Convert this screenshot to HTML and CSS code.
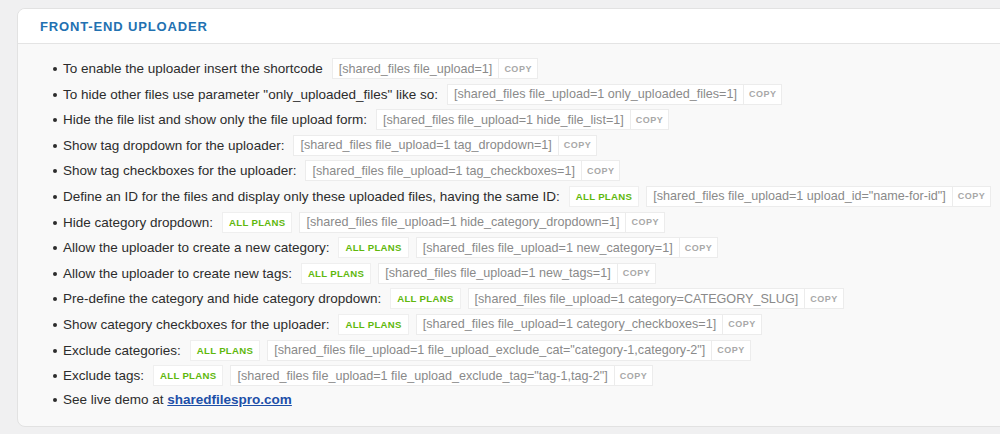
FILE: index.html
```html
<!DOCTYPE html>
<html lang="en">
<head>
    <meta charset="UTF-8">
    <meta name="viewport" content="width=device-width, initial-scale=1.0">
    <title>Front-end uploader</title>
    <link rel="stylesheet" href="styles.css">
</head>
<body>
    <div class="panel">
        <div class="panel-head">
            <h3>FRONT-END UPLOADER</h3>
        </div>
        <div class="panel-body">
            <ul class="opts">
                <li>
                    <span>To enable the uploader insert the shortcode</span>
                    <span class="sc"><code>[shared_files file_upload=1]</code><button class="copy">COPY</button></span>
                </li>
                <li>
                    <span>To hide other files use parameter "only_uploaded_files" like so:</span>
                    <span class="sc"><code>[shared_files file_upload=1 only_uploaded_files=1]</code><button class="copy">COPY</button></span>
                </li>
                <li>
                    <span>Hide the file list and show only the file upload form:</span>
                    <span class="sc"><code>[shared_files file_upload=1 hide_file_list=1]</code><button class="copy">COPY</button></span>
                </li>
                <li>
                    <span>Show tag dropdown for the uploader:</span>
                    <span class="sc"><code>[shared_files file_upload=1 tag_dropdown=1]</code><button class="copy">COPY</button></span>
                </li>
                <li>
                    <span>Show tag checkboxes for the uploader:</span>
                    <span class="sc"><code>[shared_files file_upload=1 tag_checkboxes=1]</code><button class="copy">COPY</button></span>
                </li>
                <li>
                    <span>Define an ID for the files and display only these uploaded files, having the same ID:</span>
                    <span class="plan">ALL PLANS</span>
                    <span class="sc"><code>[shared_files file_upload=1 upload_id="name-for-id"]</code><button class="copy">COPY</button></span>
                </li>
                <li>
                    <span>Hide category dropdown:</span>
                    <span class="plan">ALL PLANS</span>
                    <span class="sc"><code>[shared_files file_upload=1 hide_category_dropdown=1]</code><button class="copy">COPY</button></span>
                </li>
                <li>
                    <span>Allow the uploader to create a new category:</span>
                    <span class="plan">ALL PLANS</span>
                    <span class="sc"><code>[shared_files file_upload=1 new_category=1]</code><button class="copy">COPY</button></span>
                </li>
                <li>
                    <span>Allow the uploader to create new tags:</span>
                    <span class="plan">ALL PLANS</span>
                    <span class="sc"><code>[shared_files file_upload=1 new_tags=1]</code><button class="copy">COPY</button></span>
                </li>
                <li>
                    <span>Pre-define the category and hide category dropdown:</span>
                    <span class="plan">ALL PLANS</span>
                    <span class="sc"><code>[shared_files file_upload=1 category=CATEGORY_SLUG]</code><button class="copy">COPY</button></span>
                </li>
                <li>
                    <span>Show category checkboxes for the uploader:</span>
                    <span class="plan">ALL PLANS</span>
                    <span class="sc"><code>[shared_files file_upload=1 category_checkboxes=1]</code><button class="copy">COPY</button></span>
                </li>
                <li>
                    <span>Exclude categories:</span>
                    <span class="plan">ALL PLANS</span>
                    <span class="sc"><code>[shared_files file_upload=1 file_upload_exclude_cat="category-1,category-2"]</code><button class="copy">COPY</button></span>
                </li>
                <li>
                    <span>Exclude tags:</span>
                    <span class="plan">ALL PLANS</span>
                    <span class="sc"><code>[shared_files file_upload=1 file_upload_exclude_tag="tag-1,tag-2"]</code><button class="copy">COPY</button></span>
                </li>
                <li class="last">
                    <span>See live demo at <a href="#">sharedfilespro.com</a></span>
                </li>
            </ul>
        </div>
    </div>
</body>
</html>
```

FILE: styles.css
```css
body {
    font-family: 'Liberation Sans', Arial, sans-serif;
    background-color: #f0f0f1;
    margin: 0;
    padding: 8px 0 0 17px;
    overflow: hidden;
}

.panel {
    margin-right: -20px;
    border: 1px solid #e2e2e2;
    border-radius: 8px;
    background-color: #f9f9f9;
    overflow: hidden;
}

.panel-head {
    height: 34px;
    display: flex;
    align-items: center;
    padding-left: 22px;
    background-color: #fff;
    border-bottom: 1px solid #e4e4e4;
}

.panel-head h3 {
    margin: 0;
    font-size: 13px;
    font-weight: bold;
    letter-spacing: 0.85px;
    color: #2271b1;
}

.panel-body {
    padding: 14px 0 17px 45px;
}

.opts {
    list-style: none;
    margin: 0;
    padding: 0;
}

.opts li {
    position: relative;
    display: flex;
    align-items: center;
    gap: 9px;
    height: 21px;
    margin-bottom: 4.6px;
    font-size: 13.5px;
    color: #2c2c2c;
    white-space: nowrap;
}

.opts li > * {
    flex-shrink: 0;
}

.opts li::before {
    content: "";
    position: absolute;
    left: -10px;
    top: 9px;
    width: 4px;
    height: 4px;
    border-radius: 50%;
    background-color: #2c2c2c;
}

.opts li.last {
    margin-bottom: 0;
    height: 18px;
}

.opts li.last::before {
    top: 7px;
}

.opts a {
    color: #1d4fa8;
    font-weight: bold;
    text-decoration: underline;
}

.sc {
    display: flex;
    height: 21px;
}

.sc code {
    display: flex;
    align-items: center;
    padding: 0 6px;
    font-family: 'Liberation Sans', Arial, sans-serif;
    font-size: 12.6px;
    color: #8a8a8a;
    background-color: #fff;
    border: 1px solid #ececec;
}

.copy {
    padding: 0 5px;
    font-family: 'Liberation Sans', Arial, sans-serif;
    font-size: 9px;
    font-weight: bold;
    letter-spacing: 0.5px;
    color: #a8a8a8;
    background-color: #fff;
    border: 1px solid #ececec;
    border-left: none;
    cursor: pointer;
}

.plan {
    display: flex;
    align-items: center;
    height: 21px;
    padding: 0 6px;
    font-size: 9.6px;
    font-weight: bold;
    letter-spacing: 0.3px;
    color: #5fb80d;
    background-color: #fff;
    border: 1px solid #efefef;
    box-sizing: border-box;
    margin-right: -2px;
}
```
